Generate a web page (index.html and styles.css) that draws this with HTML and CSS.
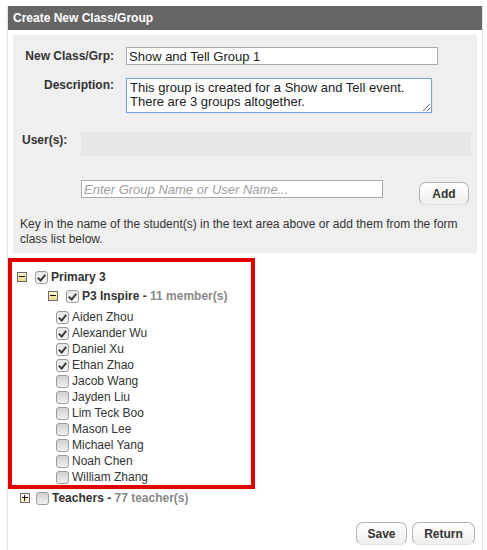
FILE: index.html
```html
<!DOCTYPE html>
<html>
<head>
<meta charset="utf-8">
<link rel="stylesheet" href="styles.css">
</head>
<body>
<div class="page">
  <div class="header">Create New Class/Group</div>
  <div class="panel">
    <div class="row row-name">
      <label class="lbl">New Class/Grp:</label>
      <input class="txt" type="text" value="Show and Tell Group 1">
    </div>
    <div class="row row-desc">
      <label class="lbl lbl-top">Description:</label>
      <textarea class="desc">This group is created for a Show and Tell event. There are 3 groups altogether.</textarea>
    </div>
    <div class="row row-users">
      <span class="lbl-left">User(s):</span>
      <div class="users-box"></div>
    </div>
    <div class="row row-search">
      <input class="search" type="text" placeholder="Enter Group Name or User Name...">
      <button class="btn btn-add">Add</button>
    </div>
    <p class="help">Key in the name of the student(s) in the text area above or add them from the form class list below.</p>
  </div>

  <div class="highlight">
    <div class="node node-l1">
      <span class="exp exp-minus"></span>
      <span class="cb checked"></span>
      <span class="node-title">Primary 3</span>
    </div>
    <div class="node node-l2">
      <span class="exp exp-minus"></span>
      <span class="cb checked"></span>
      <span class="node-title">P3 Inspire - <span class="count">11 member(s)</span></span>
    </div>
    <ul class="members">
      <li class="member"><span class="cb checked"></span>Aiden Zhou</li>
      <li class="member"><span class="cb checked"></span>Alexander Wu</li>
      <li class="member"><span class="cb checked"></span>Daniel Xu</li>
      <li class="member"><span class="cb checked"></span>Ethan Zhao</li>
      <li class="member"><span class="cb"></span>Jacob Wang</li>
      <li class="member"><span class="cb"></span>Jayden Liu</li>
      <li class="member"><span class="cb"></span>Lim Teck Boo</li>
      <li class="member"><span class="cb"></span>Mason Lee</li>
      <li class="member"><span class="cb"></span>Michael Yang</li>
      <li class="member"><span class="cb"></span>Noah Chen</li>
      <li class="member"><span class="cb"></span>William Zhang</li>
    </ul>
  </div>

  <div class="node node-teachers">
    <span class="exp exp-plus"></span>
    <span class="cb"></span>
    <span class="node-title">Teachers - <span class="count">77 teacher(s)</span></span>
  </div>

  <div class="actions">
    <button class="btn btn-save">Save</button>
    <button class="btn btn-return">Return</button>
  </div>
</div>
</body>
</html>
```

FILE: styles.css
```css
* { box-sizing: border-box; }

html, body {
  margin: 0;
  padding: 0;
  background: #ffffff;
}

body {
  font-family: "Liberation Sans", Arial, sans-serif;
  font-size: 12px;
  color: #333333;
}

.page {
  margin: 6px 0 0 7px;
  width: 476px;
  min-height: 544px;
  border-left: 1px solid #e4e4e4;
  border-right: 1px solid #e4e4e4;
}

.header {
  height: 24px;
  line-height: 24px;
  padding-left: 5px;
  background: #666666;
  color: #ffffff;
  font-weight: bold;
  font-size: 12px;
}

.panel {
  margin: 5px 0 0 5px;
  width: 464px;
  background: #efefef;
  padding: 12px 0 6px 0;
}

.row {
  display: flex;
}

.lbl {
  width: 101px;
  margin-right: 12px;
  text-align: right;
  font-weight: bold;
  color: #333333;
  align-self: center;
}

.lbl-top {
  align-self: flex-start;
  line-height: 14px;
}

.txt {
  width: 312px;
  height: 18px;
  border: 1px solid #a9a9a9;
  background: #ffffff;
  padding: 0 2px;
  margin: 0;
  font-family: "Liberation Sans", Arial, sans-serif;
  font-size: 13px;
  color: #222222;
}

.row-desc {
  margin-top: 13px;
}

.desc {
  width: 306px;
  height: 35px;
  border: 1px solid #7aa5dc;
  box-shadow: 0 0 1px #a9c7ee;
  padding: 2px 3px;
  margin: 0;
  font-family: "Liberation Sans", Arial, sans-serif;
  font-size: 13px;
  line-height: 14px;
  color: #222222;
  resize: both;
  overflow: hidden;
}

.row-users {
  margin-top: 19px;
}

.lbl-left {
  width: 68px;
  padding-left: 9px;
  font-weight: bold;
  line-height: 16px;
}

.users-box {
  width: 390px;
  height: 24px;
  background: #e6e6e6;
}

.row-search {
  margin-top: 24px;
  align-items: flex-start;
}

.search {
  margin: 0 0 0 68px;
  width: 302px;
  height: 18px;
  border: 1px solid #a9a9a9;
  background: #ffffff;
  padding: 0 2px;
  font-family: "Liberation Sans", Arial, sans-serif;
  font-size: 13px;
}

.search::placeholder {
  color: #a0a0a0;
  font-style: italic;
}

.btn {
  height: 23px;
  padding: 0;
  border: 1px solid #b3b3b3;
  border-bottom-color: #e2e2e2;
  border-radius: 7px;
  background: linear-gradient(#ffffff, #efefef);
  font-family: "Liberation Sans", Arial, sans-serif;
  font-size: 12px;
  font-weight: bold;
  color: #333333;
}

.btn-add {
  width: 50px;
  margin: 2px 0 0 36px;
}

.help {
  margin: 12px 0 0 0;
  padding: 0 7px;
  line-height: 15px;
  color: #333333;
}

.highlight {
  margin-top: 5px;
  width: 247px;
  height: 231px;
  border: 4px solid #e00000;
  padding: 6px 0 0 0;
}

.node {
  display: flex;
  align-items: center;
  height: 18px;
}

.node-title {
  font-weight: bold;
  color: #333333;
}

.count {
  color: #888888;
}

.exp {
  position: relative;
  width: 10px;
  height: 10px;
  border: 1px solid #6b6b6b;
  background: linear-gradient(#fff6cf, #f0d991);
  flex: none;
}

.exp::before {
  content: "";
  position: absolute;
  left: 1px;
  top: 3px;
  width: 6px;
  height: 1px;
  background: #111111;
}

.exp-plus {
  background: linear-gradient(#fffdf0, #f6ecc4);
}

.exp-plus::after {
  content: "";
  position: absolute;
  left: 3px;
  top: 1px;
  width: 1px;
  height: 6px;
  background: #111111;
}

.cb {
  position: relative;
  display: inline-block;
  width: 13px;
  height: 13px;
  border: 1px solid #9a9a9a;
  border-radius: 3px;
  background: linear-gradient(#cfcfcf, #f1f1f1);
  flex: none;
}

.cb.checked {
  background: linear-gradient(#e4e4e4, #fbfbfb);
}

.cb.checked::after {
  content: "";
  position: absolute;
  left: 3px;
  top: 1px;
  width: 3px;
  height: 6px;
  border-right: 2px solid #3a3a3a;
  border-bottom: 2px solid #3a3a3a;
  transform: rotate(40deg);
}

.node-l1 .exp { margin-left: 5px; }
.node-l1 .cb { margin-left: 8px; margin-right: 3px; }

.node-l2 { margin-top: 1px; }
.node-l2 .exp { margin-left: 36px; }
.node-l2 .cb { margin-left: 8px; margin-right: 3px; }

.members {
  list-style: none;
  margin: 4px 0 0 0;
  padding: 0;
}

.member {
  display: flex;
  align-items: center;
  height: 16px;
  padding-left: 44px;
  color: #333333;
}

.member .cb {
  margin-right: 3px;
}

.node-teachers .exp { margin-left: 12px; }
.node-teachers .cb { margin-left: 6px; margin-right: 3px; }

.actions {
  display: flex;
  justify-content: flex-end;
  gap: 5px;
  margin: 15px 7px 0 0;
}

.btn-save { width: 51px; }
.btn-return { width: 63px; }
```
